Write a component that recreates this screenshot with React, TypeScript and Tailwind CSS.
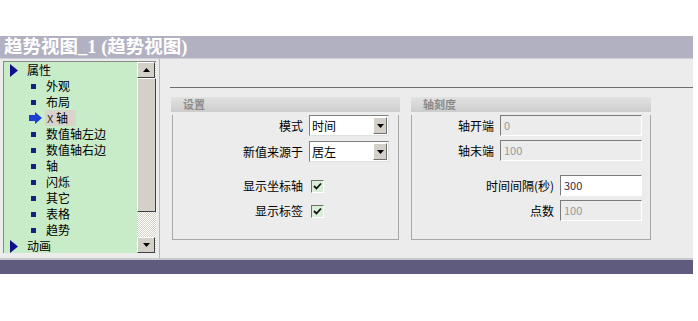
import React from "react";

const font = { fontFamily: '"Noto Sans CJK SC", "Noto Sans", sans-serif' };

const treeItems = ["外观", "布局", "X 轴", "数值轴左边", "数值轴右边", "轴", "闪烁", "其它", "表格", "趋势"];

function Triangle() {
  return (
    <svg width="8" height="13" viewBox="0 0 8 13" className="shrink-0">
      <polygon points="0,0 8,6.5 0,13" fill="#10108a" />
    </svg>
  );
}

function BlockArrow() {
  return (
    <svg width="13" height="12" viewBox="0 0 13 12" className="shrink-0">
      <polygon points="0,3 6,3 6,0 13,6 6,12 6,9 0,9" fill="#1e3fd0" />
    </svg>
  );
}

function ScrollButton({ down }: { down?: boolean }) {
  return (
    <div className="w-[18px] h-[16px] bg-[#d4d0c8] border border-t-white border-l-white border-r-[#404040] border-b-[#404040] flex items-center justify-center">
      <svg width="7" height="4" viewBox="0 0 7 4">
        <polygon points={down ? "0,0 7,0 3.5,4" : "0,4 7,4 3.5,0"} fill="#000" />
      </svg>
    </div>
  );
}

function Tree() {
  return (
    <div className="w-[153px] h-[192px] flex border-t border-l border-[#8a8a8a] bg-[#c8ebc8]">
      <div className="flex-1 text-[12px] text-black leading-[16px]">
        <div className="h-[16px] flex items-center pl-[6px] gap-[9px]">
          <Triangle />
          <span>属性</span>
        </div>
        {treeItems.map((t) =>
          t === "X 轴" ? (
            <div key={t} className="h-[16px] flex items-center pl-[25px]">
              <BlockArrow />
              <span className="bg-[#d8d4cc] px-[2px] ml-[3px] pr-[8px]">
                <span className="text-[11px] text-[#333]">X</span> 轴
              </span>
            </div>
          ) : (
            <div key={t} className="h-[16px] flex items-center pl-[27px] gap-[10px]">
              <span className="w-[5px] h-[5px] bg-[#142184] shrink-0" />
              <span>{t}</span>
            </div>
          )
        )}
        <div className="h-[16px] flex items-center pl-[6px] gap-[9px]">
          <Triangle />
          <span>动画</span>
        </div>
      </div>
      <div className="w-[19px] flex flex-col bg-[repeating-conic-gradient(#ffffff_0%_25%,#d4d0c8_0%_50%)] bg-size-[2px_2px]">
        <ScrollButton />
        <div className="h-[134px] bg-[#d4d0c8] border border-t-white border-l-white border-r-[#404040] border-b-[#404040]" />
        <div className="flex-1" />
        <ScrollButton down />
      </div>
    </div>
  );
}

function Select({ value }: { value: string }) {
  return (
    <div className="w-[80px] h-[21px] flex bg-white border border-t-[#808080] border-l-[#808080] border-r-[#e0e0e0] border-b-[#e0e0e0]">
      <span className="flex-1 pl-[2px] text-[12px] leading-[19px] text-black">{value}</span>
      <div className="w-[14px] m-[1px] bg-[#d4d0c8] border border-t-white border-l-white border-r-[#707070] border-b-[#707070] flex items-center justify-center">
        <svg width="7" height="4" viewBox="0 0 7 4">
          <polygon points="0,0 7,0 3.5,4" fill="#000" />
        </svg>
      </div>
    </div>
  );
}

function Check() {
  return (
    <div className="w-[13px] h-[13px] bg-[#d9eed9] border border-t-[#707070] border-l-[#707070] border-r-white border-b-white flex items-center justify-center">
      <svg width="9" height="8" viewBox="0 0 9 8">
        <polyline points="1,4 3.5,6.5 8,1.5" fill="none" stroke="#111" strokeWidth="1.8" />
      </svg>
    </div>
  );
}

function TextBox({ value, width, enabled }: { value: string; width: number; enabled?: boolean }) {
  return (
    <div
      className={
        "h-[21px] border border-t-[#7a7a7a] border-l-[#7a7a7a] border-r-white border-b-white pl-[3px] text-[11px] leading-[19px] " +
        (enabled ? "bg-white text-[#3a2a3a]" : "bg-[#ececec] text-[#999999]")
      }
      style={{ width }}
    >
      {value}
    </div>
  );
}

function GroupHeader({ title }: { title: string }) {
  return (
    <div className="h-[15px] bg-gradient-to-b from-[#e2e2e2] to-[#cdcdcd] pl-[12px] text-[11px] leading-[15px] text-[#8c8c8c] font-bold">
      {title}
    </div>
  );
}

export default function App() {
  return (
    <div className="w-[698px] h-[321px] bg-white overflow-hidden" style={font}>
      <div className="h-[36px]" />
      <div className="w-[693px]">
        <div
          className="h-[22px] bg-[#b2b1c1] text-white text-[18.5px] font-bold leading-[22px] pl-[4px]"
          style={{ fontFamily: '"Liberation Serif", "Noto Sans CJK SC", serif' }}
        >
          趋势视图_1 (趋势视图)
        </div>
        <div className="h-[200px] flex bg-[#ececec] border-t border-[#d0d0d8] pl-[3px] pt-[2px]">
          <Tree />
          <div className="ml-[3px] mt-[-2px] flex-1 border-l border-[#b8b8b8] flex flex-col">
            <div className="h-[28px]" />
            <div className="ml-[10px] border-t border-[#6e6e6e]" />
            <div className="flex pt-[9px] pl-[11px] gap-[11px]">
              <div className="w-[229px]">
                <GroupHeader title="设置" />
                <div className="h-[125px] border border-[#a8a8a8] border-t-0 mx-[1px] text-[12px] text-black">
                  <div className="flex items-center h-[21px] mt-[3px]">
                    <span className="w-[136px] text-right pr-[6px]">模式</span>
                    <Select value="时间" />
                  </div>
                  <div className="flex items-center h-[21px] mt-[5px]">
                    <span className="w-[136px] text-right pr-[6px]">新值来源于</span>
                    <Select value="居左" />
                  </div>
                  <div className="flex items-center h-[16px] mt-[16px]">
                    <span className="w-[138px] text-right pr-[8px]">显示坐标轴</span>
                    <Check />
                  </div>
                  <div className="flex items-center h-[16px] mt-[9px]">
                    <span className="w-[138px] text-right pr-[8px]">显示标签</span>
                    <Check />
                  </div>
                </div>
              </div>
              <div className="w-[240px]">
                <GroupHeader title="轴刻度" />
                <div className="h-[125px] border border-[#a8a8a8] border-t-0 text-[12px] text-black">
                  <div className="flex items-center h-[21px] mt-[3px]">
                    <span className="w-[88px] text-right pr-[6px]">轴开端</span>
                    <TextBox value="0" width={142} />
                  </div>
                  <div className="flex items-center h-[21px] mt-[4px]">
                    <span className="w-[88px] text-right pr-[6px]">轴末端</span>
                    <TextBox value="100" width={142} />
                  </div>
                  <div className="flex items-center h-[21px] mt-[14px]">
                    <span className="w-[148px] text-right pr-[6px]">时间间隔(秒)</span>
                    <TextBox value="300" width={82} enabled />
                  </div>
                  <div className="flex items-center h-[21px] mt-[4px]">
                    <span className="w-[148px] text-right pr-[6px]">点数</span>
                    <TextBox value="100" width={82} />
                  </div>
                </div>
              </div>
            </div>
          </div>
        </div>
        <div className="h-[16px] bg-[#5e5b7f] border-t-2 border-[#c8c8d0]" />
      </div>
    </div>
  );
}
